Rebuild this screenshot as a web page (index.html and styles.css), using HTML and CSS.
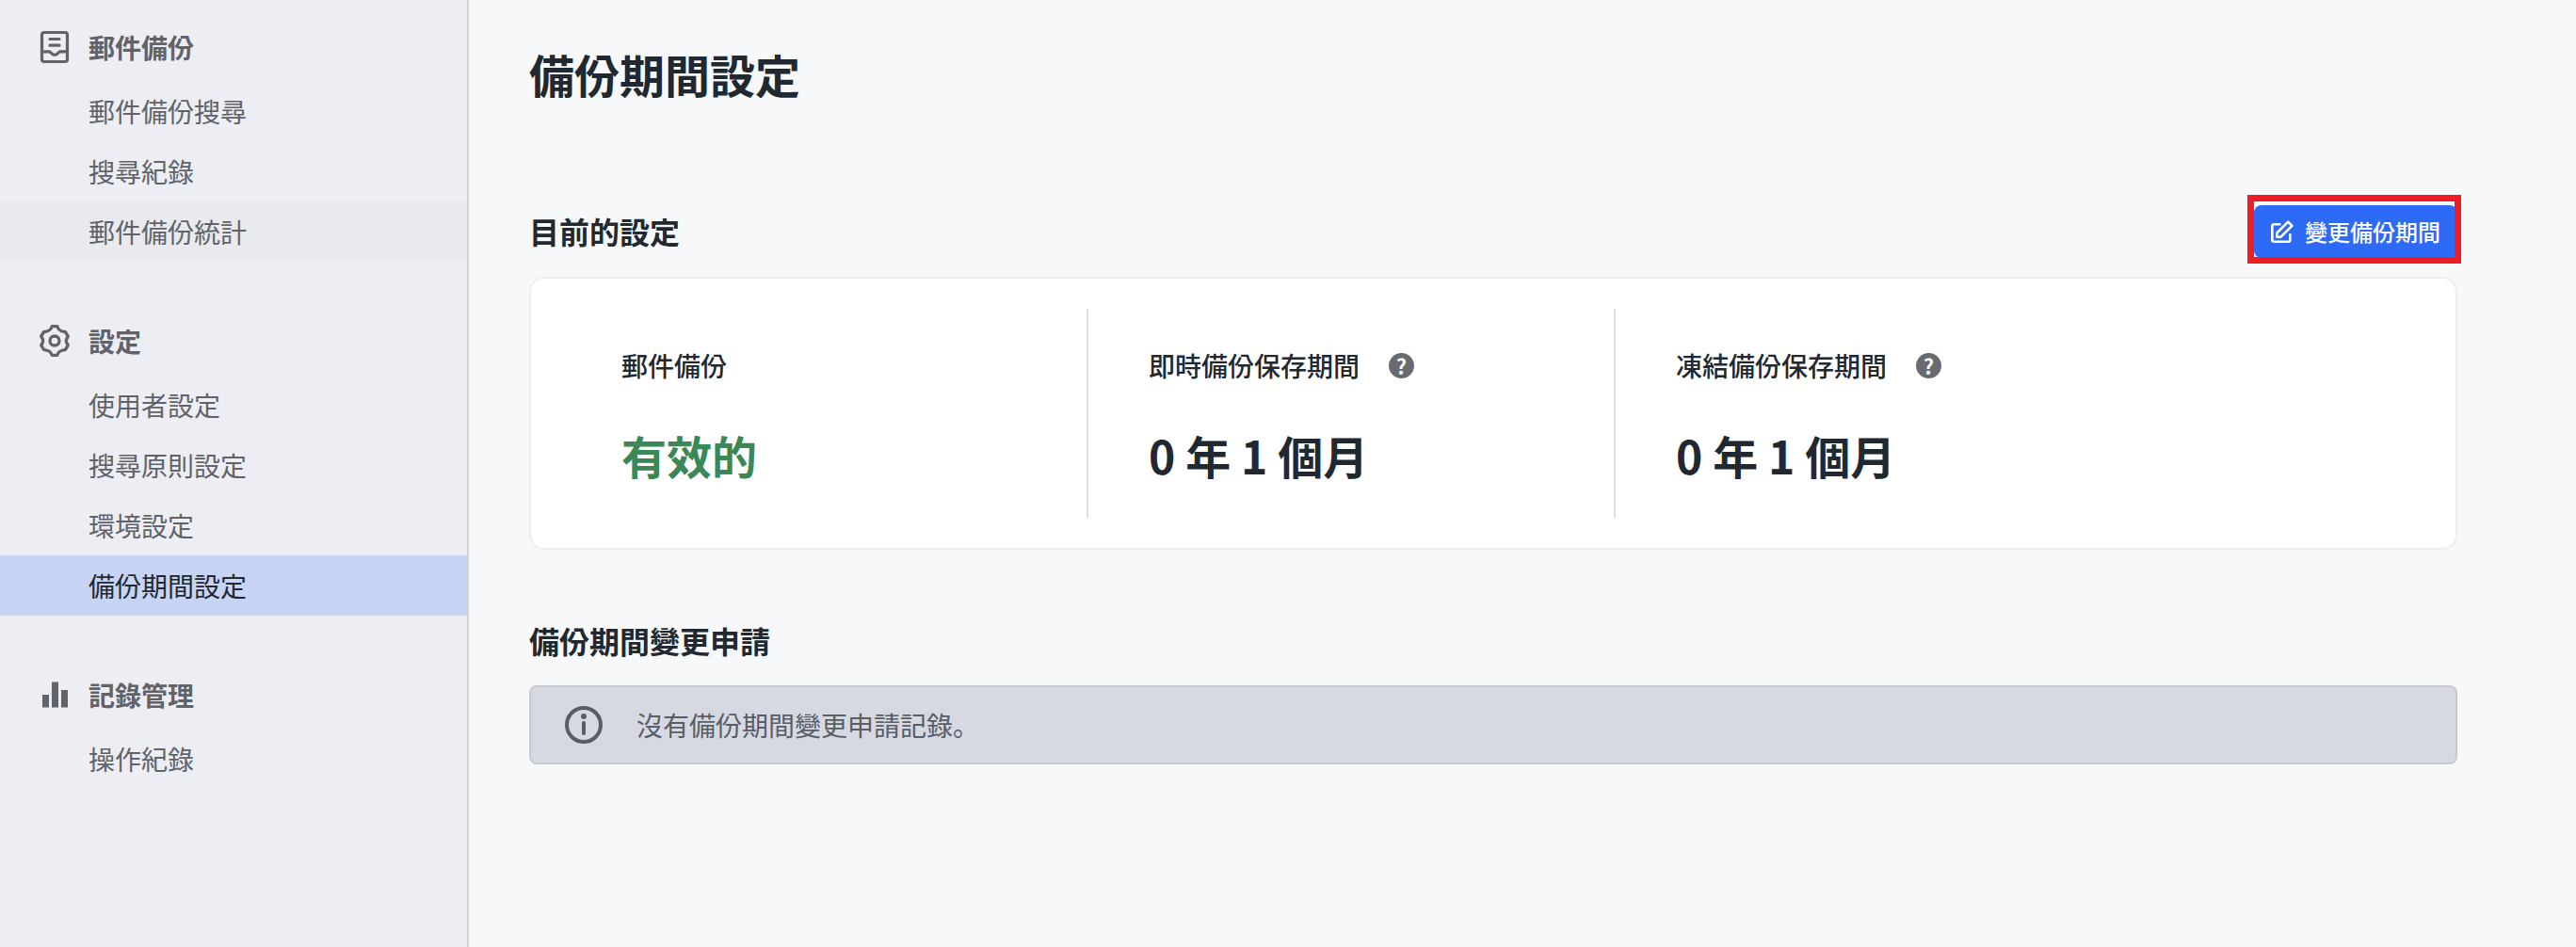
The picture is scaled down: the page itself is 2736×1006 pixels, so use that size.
FILE: index.html
```html
<!DOCTYPE html>
<html lang="ja">
<head>
    <meta charset="UTF-8">
    <meta name="viewport" content="width=device-width, initial-scale=1.0">
    <title>備份期間設定</title>
    <link rel="stylesheet" href="styles.css">
</head>

<body>
    <nav class="sidebar">
        <div class="menu-group">
            <div class="menu-header">
                <svg class="menu-icon" viewBox="0 0 40 40" fill="none" stroke="currentColor" stroke-width="3.2" stroke-linejoin="round">
                    <rect x="6.5" y="4.5" width="27" height="31" rx="2.5"/>
                    <path d="M15 11.500h10M15 18.200h10" stroke-linecap="round"/>
                    <path d="M6.500 24.800h8c1.500 0 1.500 3.500 5.500 3.500s4-3.500 5.500-3.500h8"/>
                </svg>
                <span>郵件備份</span>
            </div>
            <a class="menu-item">郵件備份搜尋</a>
            <a class="menu-item">搜尋紀錄</a>
            <a class="menu-item hovered">郵件備份統計</a>
        </div>

        <div class="menu-group">
            <div class="menu-header">
                <svg class="menu-icon" viewBox="0 0 40 40" fill="none" stroke="currentColor" stroke-width="3.3" stroke-linejoin="round">
                    <path d="M17.200 4.700h5.600C24 8.500 26 9.800 31.500 10.600L34.300 15.400C31.600 18.500 31.600 21.500 34.300 24.600L31.500 29.400C26 30.200 24 31.500 22.800 35.300H17.200C16 31.500 14 30.200 8.500 29.400L5.700 24.600C8.400 21.500 8.400 18.500 5.700 15.400L8.500 10.600C14 9.800 16 8.500 17.200 4.700z"/>
                    <circle cx="20" cy="20" r="5"/>
                </svg>
                <span>設定</span>
            </div>
            <a class="menu-item">使用者設定</a>
            <a class="menu-item">搜尋原則設定</a>
            <a class="menu-item">環境設定</a>
            <a class="menu-item active">備份期間設定</a>
        </div>

        <div class="menu-group">
            <div class="menu-header">
                <svg class="menu-icon" viewBox="0 0 40 40" fill="currentColor">
                    <path d="M7 20h7v13.500H7zM17 6.500h7v27h-7zM27 15h7v18.500h-7z"/>
                </svg>
                <span>記錄管理</span>
            </div>
            <a class="menu-item">操作紀錄</a>
        </div>
    </nav>

    <main class="content">
        <h1>備份期間設定</h1>

        <div class="section-header">
            <h2>目前的設定</h2>
            <div class="highlight">
                <button class="edit-button">
                    <svg class="edit-icon" viewBox="0 0 24 24" fill="none" stroke="currentColor" stroke-width="2.6" stroke-linejoin="round">
                        <path d="M10.500 4.200H3.200A2 2 0 0 0 1.300 6.200v14.500a2 2 0 0 0 2 2h15a2 2 0 0 0 2-2V14"/>
                        <path d="M6.300 13.500L18.200 1.700l4.200 4.200L10.500 17.700H6.300z"/>
                    </svg>
                    <span>變更備份期間</span>
                </button>
            </div>
        </div>

        <div class="card">
            <div class="card-item">
                <div class="card-label">郵件備份</div>
                <div class="card-value valid">有效的</div>
            </div>
            <div class="card-item">
                <div class="card-label">即時備份保存期間<span class="help">?</span></div>
                <div class="card-value">0 年 1 個月</div>
            </div>
            <div class="card-item">
                <div class="card-label">凍結備份保存期間<span class="help">?</span></div>
                <div class="card-value">0 年 1 個月</div>
            </div>
        </div>

        <h2 class="request-title">備份期間變更申請</h2>
        <div class="alert">
            <svg class="alert-icon" viewBox="0 0 40 40" fill="none" stroke="currentColor" stroke-width="4">
                <circle cx="20" cy="20" r="18"/>
                <path d="M20 18v11" stroke-linecap="round"/>
                <circle cx="20" cy="11" r="3" fill="currentColor" stroke="none"/>
            </svg>
            <span>沒有備份期間變更申請記錄。</span>
        </div>
    </main>
</body>
</html>
```
FILE: styles.css
```css
* {
    box-sizing: border-box;
}

body {
    display: flex;
    min-height: 100vh;
    margin: 0;
    font-family: "Noto Sans CJK JP", "Noto Sans CJK TC", sans-serif;
    font-size: 28px;
    color: #22282f;
    background-color: #f7f8fa;
}

h1, h2 {
    margin: 0;
    font-weight: bold;
}

h1 {
    font-size: 48px;
    line-height: 72px;
}

h2 {
    font-size: 32px;
    line-height: 48px;
}

.sidebar {
    width: 498px;
    padding-top: 14px;
    flex-shrink: 0;
    color: #606369;
    background-color: #edeef3;
    border-right: 2px solid #d0d2d5;
}

.menu-group {
    margin-bottom: 48px;
}

.menu-header {
    display: flex;
    align-items: center;
    gap: 16px;
    height: 72px;
    padding-left: 38px;
    font-weight: bold;
}

.menu-icon {
    width: 40px;
    height: 40px;
}

.menu-item {
    display: block;
    height: 64px;
    padding-left: 94px;
    line-height: 64px;
}

.hovered {
    background-color: #e9eaee;
}

.active {
    color: #22282f;
    background-color: #c7d4f4;
}

.content {
    flex: 1;
    padding: 42px 126px 0 64px;
}

.section-header {
    display: flex;
    justify-content: space-between;
    align-items: center;
    height: 73px;
    margin-top: 93px;
    margin-bottom: 14px;
}

.section-header h2 {
    padding-top: 3px;
}

.highlight {
    width: 227px;
    height: 73px;
    margin-right: -4px;
    border: 7px solid #ee1c25;
    overflow: hidden;
}

.edit-button {
    display: flex;
    align-items: center;
    gap: 12px;
    width: 216px;
    height: 56px;
    margin-top: 4px;
    padding: 0 18px;
    font-family: inherit;
    font-size: 24px;
    font-weight: 500;
    line-height: 34px;
    white-space: nowrap;
    color: white;
    background-color: #2d6bf6;
    border: none;
    border-radius: 8px;
}

.edit-button span {
    padding-bottom: 1px;
}

.edit-icon {
    width: 24px;
    height: 24px;
    flex-shrink: 0;
}

.card {
    display: flex;
    height: 290px;
    padding: 32px;
    background-color: white;
    border: 2px solid #edeef1;
    border-radius: 16px;
}

.card-item {
    width: 560px;
    padding: 39px 0 0 64px;
    border-right: 2px solid #e0e0e0;
}

.card-item:last-child {
    border-right: none;
}

.card-label {
    display: flex;
    align-items: center;
    height: 42px;
    font-weight: 500;
}

.help {
    width: 27px;
    height: 27px;
    margin-left: 31px;
    font-size: 22px;
    font-weight: bold;
    line-height: 26px;
    text-align: center;
    color: white;
    background-color: #696b70;
    border-radius: 50%;
}

.card-value {
    margin-top: 38px;
    font-size: 48px;
    font-weight: bold;
    line-height: 72px;
}

.valid {
    color: #3b8755;
}

.request-title {
    margin-top: 72px;
    margin-bottom: 24px;
}

.alert {
    display: flex;
    align-items: center;
    gap: 36px;
    height: 84px;
    padding-left: 36px;
    color: #595d65;
    background-color: #d6d9e2;
    border: 2px solid #c8cad2;
    border-radius: 8px;
}

.alert-icon {
    width: 40px;
    height: 40px;
}
```
